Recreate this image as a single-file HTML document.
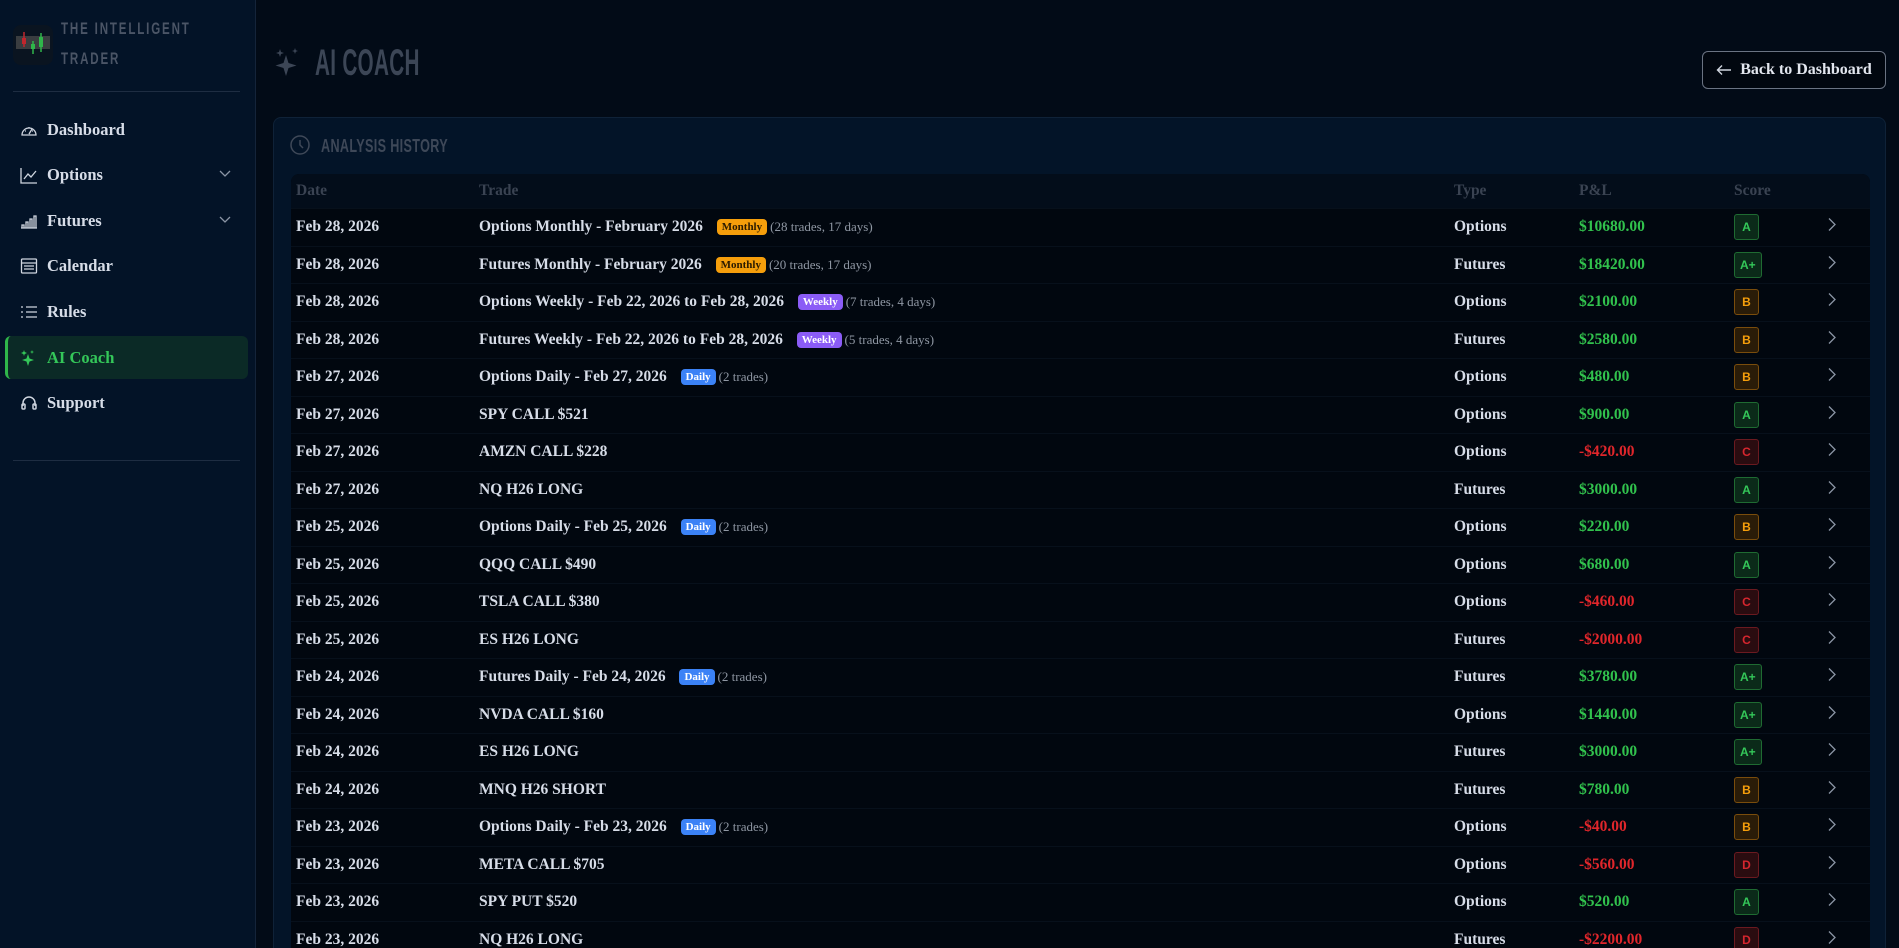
<!DOCTYPE html>
<html style="width:1899px;height:948px;overflow:hidden"><head><meta charset="utf-8"><style>
*{box-sizing:border-box;margin:0;padding:0}
body{width:1899px;height:948px;overflow:hidden;position:relative;background:#020b17;font-family:"Liberation Serif","DejaVu Serif",serif;color:#d7dde8}
.side{position:absolute;left:0;top:0;width:256px;height:948px;background:#031327;border-right:1px solid #14243a}
.logo{position:absolute;left:13px;top:25px;width:40px;height:40px;border-radius:8px;background:#0a1420}
.brand{position:absolute;left:61px;top:14px;font-family:"Liberation Sans",sans-serif;font-weight:bold;font-size:17px;letter-spacing:2.7px;line-height:30px;color:#4b5566;transform:scaleX(0.68);transform-origin:left top;white-space:nowrap}
.hr{position:absolute;left:13px;width:227px;height:1px;background:#1e2d42}
.nav{position:absolute;left:20px;font-weight:bold;font-size:16.5px;color:#d7dde8;display:flex;align-items:center;gap:9px}
.nav svg{width:18px;height:18px}
.chev{position:absolute;left:219px}
.active{position:absolute;left:5px;top:336px;width:243px;height:43px;background:#0b2a26;border-left:3px solid #2fb54a;border-radius:6px}
.title{position:absolute;left:315px;top:42px;font-family:"Liberation Sans",sans-serif;font-weight:bold;font-size:37px;letter-spacing:0.5px;color:#3c4656;transform:scaleX(0.56);transform-origin:left top;white-space:nowrap}
.back{position:absolute;left:1702px;top:51px;width:184px;height:38px;border:1px solid #6a7382;border-radius:6px;background:#01070f;font-weight:bold;font-size:16px;color:#e2e6ee;display:flex;align-items:center;justify-content:center;gap:8px}
.card{position:absolute;left:273px;top:117px;width:1613px;height:831px;overflow:hidden;background:#031428;border:1px solid #0f2238;border-bottom:none;border-radius:8px 8px 0 0}
.ch{position:absolute;left:47px;top:18px;font-family:"Liberation Sans",sans-serif;font-weight:bold;font-size:18px;letter-spacing:.5px;color:#3e4858;transform:scaleX(0.7);transform-origin:left top;white-space:nowrap}
.tbl{position:absolute;left:17px;top:56px;width:1579px;background:#01070f;border-radius:8px;overflow:hidden}
.row{position:relative;height:37.5px;border-top:1px solid #07101b;font-weight:bold;font-size:15.5px}
.hd{height:34px;background:#030d1a;color:#3a4352;border:none}
.row>div{position:absolute;top:50%;transform:translateY(-50%);white-space:nowrap}
.c1{left:5px}.c2{left:188px}.c3{left:1163px}.c4{left:1288px}.c5{left:1443px}.c6{left:1536px}
.g{color:#31c24d}.r{color:#e0262b}
.tag{display:inline-block;font-size:11px;padding:2px 5px;border-radius:4px;margin-left:10px;vertical-align:1px}
.m{background:#f59e0b;color:#2a1a00}.w{background:#8b5cf6;color:#fff}.d{background:#3b82f6;color:#fff}
.sub{font-weight:normal;font-size:13px;color:#8f97a3;margin-left:3px}
.sc{display:inline-block;min-width:25px;height:26px;line-height:24px;padding:0 5px;text-align:center;border-radius:3px;border:1px solid;font-family:"Liberation Sans",sans-serif;font-size:12px;font-weight:bold}
.A{background:#0b2a19;border-color:#1f6b32;color:#34c759}
.B{background:#2a1c08;border-color:#7a4d0c;color:#f59e0b}
.C{background:#2a0c10;border-color:#6b1a20;color:#d6262e}
</style></head><body>
<div class="side">
<div class="logo"><svg width="40" height="40"><rect x="3" y="11" width="34" height="13" fill="#3a3d40"/><line x1="11" y1="7" x2="11" y2="22" stroke="#c0262d" stroke-width="1.5"/><rect x="9" y="13" width="4" height="6" fill="#c0262d"/><line x1="20" y1="16" x2="20" y2="29" stroke="#2fb54a" stroke-width="1.5"/><rect x="18" y="19" width="4" height="5" fill="#2fb54a"/><line x1="28" y1="8" x2="28" y2="27" stroke="#2fb54a" stroke-width="1.5"/><rect x="26" y="12" width="4" height="10" fill="#2fb54a"/></svg></div>
<div class="brand">THE INTELLIGENT<br>TRADER</div>
<div class="hr" style="top:91px"></div>
<div class="nav" style="top:120px"><svg viewBox="0 0 18 18" fill="none" stroke="#cfd5df" stroke-width="1.3"><path d="M2 14a7 7 0 1 1 14 0zM9 13l3-5M5 10h1M12 10h1M9 6v1"/></svg>Dashboard</div>
<div class="nav" style="top:165px"><svg viewBox="0 0 18 18" fill="none" stroke="#cfd5df" stroke-width="1.3"><path d="M1 2v15h16M4 13l4-5 3 3 5-6"/></svg>Options</div>
<svg class="chev" style="top:170px" width="12" height="8" viewBox="0 0 12 8" fill="none" stroke="#8b95a5" stroke-width="1.3"><path d="M1 1l5 5 5-5"/></svg>
<div class="nav" style="top:211px"><svg viewBox="0 0 18 18" fill="none" stroke="#cfd5df" stroke-width="1.3"><path d="M1 16h16M2 16v-3h2v3M6 16v-6h2v6M10 16v-9h2v9M14 16v-12h2v12"/></svg>Futures</div>
<svg class="chev" style="top:216px" width="12" height="8" viewBox="0 0 12 8" fill="none" stroke="#8b95a5" stroke-width="1.3"><path d="M1 1l5 5 5-5"/></svg>
<div class="nav" style="top:256px"><svg viewBox="0 0 18 18" fill="none" stroke="#cfd5df" stroke-width="1.3"><rect x="1.5" y="2" width="15" height="14" rx="1"/><path d="M1.5 6h15M4 9h10M4 12h10"/></svg>Calendar</div>
<div class="nav" style="top:302px"><svg viewBox="0 0 18 18" fill="none" stroke="#cfd5df" stroke-width="1.3"><path d="M6 4h11M6 9h11M6 14h11M1 4h2M1 9h2M1 14h2"/></svg>Rules</div>
<div class="active"></div>
<div class="nav" style="top:348px;color:#34c759"><svg viewBox="0 0 18 18" fill="#34c759"><path d="M8 5l1.5 4.5L14 11l-4.5 1.5L8 17l-1.5-4.5L2 11l4.5-1.5zM4 1l.7 2L7 4l-2.3 1L4 7l-.7-2L1 4l2.3-1zM12 1l.5 1.5L14 3l-1.5.5L12 5l-.5-1.5L10 3l1.5-.5z"/></svg>AI Coach</div>
<div class="nav" style="top:393px"><svg viewBox="0 0 18 18" fill="none" stroke="#cfd5df" stroke-width="1.5"><path d="M3 12V9a6 6 0 0 1 12 0v3"/><rect x="2" y="10" width="3" height="5" rx="1"/><rect x="13" y="10" width="3" height="5" rx="1"/></svg>Support</div>
<div class="hr" style="top:460px"></div>
</div>
<svg style="position:absolute;left:274px;top:46px" width="28" height="34" viewBox="0 0 28 34" fill="#3c4656"><path d="M12 9l2.5 8 8 2.5-8 2.5-2.5 8-2.5-8-8-2.5 8-2.5zM6 3l1 3 3 1-3 1-1 3-1-3-3-1 3-1zM21 2l.8 2.2L24 5l-2.2.8L21 8l-.8-2.2L18 5l2.2-.8z"/></svg>
<div class="title">AI COACH</div>
<div class="back"><svg width="16" height="12" viewBox="0 0 16 12" fill="none" stroke="#cfd5df" stroke-width="1.4"><path d="M15 6H2M6 1.5L1.5 6 6 10.5"/></svg>Back to Dashboard</div>
<div class="card">
<svg style="position:absolute;left:15px;top:16px" width="22" height="22" viewBox="0 0 22 22" fill="none" stroke="#3e4858" stroke-width="1.5"><circle cx="11" cy="11" r="9"/><path d="M11 6v5l3 3"/></svg>
<div class="ch">ANALYSIS HISTORY</div>
<div class="tbl">
<div class="row hd"><div class="c1">Date</div><div class="c2">Trade</div><div class="c3">Type</div><div class="c4">P&amp;L</div><div class="c5">Score</div></div>
<div class="row"><div class="c1">Feb 28, 2026</div><div class="c2">Options Monthly - February 2026 <span class="tag m">Monthly</span><span class="sub">(28 trades, 17 days)</span></div><div class="c3">Options</div><div class="c4 g">$10680.00</div><div class="c5"><span class="sc A">A</span></div><div class="c6"><svg width="10" height="16" viewBox="0 0 10 16" fill="none" stroke="#8b95a5" stroke-width="1.3"><path d="M2 2l6 6-6 6"/></svg></div></div>
<div class="row"><div class="c1">Feb 28, 2026</div><div class="c2">Futures Monthly - February 2026 <span class="tag m">Monthly</span><span class="sub">(20 trades, 17 days)</span></div><div class="c3">Futures</div><div class="c4 g">$18420.00</div><div class="c5"><span class="sc A">A+</span></div><div class="c6"><svg width="10" height="16" viewBox="0 0 10 16" fill="none" stroke="#8b95a5" stroke-width="1.3"><path d="M2 2l6 6-6 6"/></svg></div></div>
<div class="row"><div class="c1">Feb 28, 2026</div><div class="c2">Options Weekly - Feb 22, 2026 to Feb 28, 2026 <span class="tag w">Weekly</span><span class="sub">(7 trades, 4 days)</span></div><div class="c3">Options</div><div class="c4 g">$2100.00</div><div class="c5"><span class="sc B">B</span></div><div class="c6"><svg width="10" height="16" viewBox="0 0 10 16" fill="none" stroke="#8b95a5" stroke-width="1.3"><path d="M2 2l6 6-6 6"/></svg></div></div>
<div class="row"><div class="c1">Feb 28, 2026</div><div class="c2">Futures Weekly - Feb 22, 2026 to Feb 28, 2026 <span class="tag w">Weekly</span><span class="sub">(5 trades, 4 days)</span></div><div class="c3">Futures</div><div class="c4 g">$2580.00</div><div class="c5"><span class="sc B">B</span></div><div class="c6"><svg width="10" height="16" viewBox="0 0 10 16" fill="none" stroke="#8b95a5" stroke-width="1.3"><path d="M2 2l6 6-6 6"/></svg></div></div>
<div class="row"><div class="c1">Feb 27, 2026</div><div class="c2">Options Daily - Feb 27, 2026 <span class="tag d">Daily</span><span class="sub">(2 trades)</span></div><div class="c3">Options</div><div class="c4 g">$480.00</div><div class="c5"><span class="sc B">B</span></div><div class="c6"><svg width="10" height="16" viewBox="0 0 10 16" fill="none" stroke="#8b95a5" stroke-width="1.3"><path d="M2 2l6 6-6 6"/></svg></div></div>
<div class="row"><div class="c1">Feb 27, 2026</div><div class="c2">SPY CALL $521</div><div class="c3">Options</div><div class="c4 g">$900.00</div><div class="c5"><span class="sc A">A</span></div><div class="c6"><svg width="10" height="16" viewBox="0 0 10 16" fill="none" stroke="#8b95a5" stroke-width="1.3"><path d="M2 2l6 6-6 6"/></svg></div></div>
<div class="row"><div class="c1">Feb 27, 2026</div><div class="c2">AMZN CALL $228</div><div class="c3">Options</div><div class="c4 r">-$420.00</div><div class="c5"><span class="sc C">C</span></div><div class="c6"><svg width="10" height="16" viewBox="0 0 10 16" fill="none" stroke="#8b95a5" stroke-width="1.3"><path d="M2 2l6 6-6 6"/></svg></div></div>
<div class="row"><div class="c1">Feb 27, 2026</div><div class="c2">NQ H26 LONG</div><div class="c3">Futures</div><div class="c4 g">$3000.00</div><div class="c5"><span class="sc A">A</span></div><div class="c6"><svg width="10" height="16" viewBox="0 0 10 16" fill="none" stroke="#8b95a5" stroke-width="1.3"><path d="M2 2l6 6-6 6"/></svg></div></div>
<div class="row"><div class="c1">Feb 25, 2026</div><div class="c2">Options Daily - Feb 25, 2026 <span class="tag d">Daily</span><span class="sub">(2 trades)</span></div><div class="c3">Options</div><div class="c4 g">$220.00</div><div class="c5"><span class="sc B">B</span></div><div class="c6"><svg width="10" height="16" viewBox="0 0 10 16" fill="none" stroke="#8b95a5" stroke-width="1.3"><path d="M2 2l6 6-6 6"/></svg></div></div>
<div class="row"><div class="c1">Feb 25, 2026</div><div class="c2">QQQ CALL $490</div><div class="c3">Options</div><div class="c4 g">$680.00</div><div class="c5"><span class="sc A">A</span></div><div class="c6"><svg width="10" height="16" viewBox="0 0 10 16" fill="none" stroke="#8b95a5" stroke-width="1.3"><path d="M2 2l6 6-6 6"/></svg></div></div>
<div class="row"><div class="c1">Feb 25, 2026</div><div class="c2">TSLA CALL $380</div><div class="c3">Options</div><div class="c4 r">-$460.00</div><div class="c5"><span class="sc C">C</span></div><div class="c6"><svg width="10" height="16" viewBox="0 0 10 16" fill="none" stroke="#8b95a5" stroke-width="1.3"><path d="M2 2l6 6-6 6"/></svg></div></div>
<div class="row"><div class="c1">Feb 25, 2026</div><div class="c2">ES H26 LONG</div><div class="c3">Futures</div><div class="c4 r">-$2000.00</div><div class="c5"><span class="sc C">C</span></div><div class="c6"><svg width="10" height="16" viewBox="0 0 10 16" fill="none" stroke="#8b95a5" stroke-width="1.3"><path d="M2 2l6 6-6 6"/></svg></div></div>
<div class="row"><div class="c1">Feb 24, 2026</div><div class="c2">Futures Daily - Feb 24, 2026 <span class="tag d">Daily</span><span class="sub">(2 trades)</span></div><div class="c3">Futures</div><div class="c4 g">$3780.00</div><div class="c5"><span class="sc A">A+</span></div><div class="c6"><svg width="10" height="16" viewBox="0 0 10 16" fill="none" stroke="#8b95a5" stroke-width="1.3"><path d="M2 2l6 6-6 6"/></svg></div></div>
<div class="row"><div class="c1">Feb 24, 2026</div><div class="c2">NVDA CALL $160</div><div class="c3">Options</div><div class="c4 g">$1440.00</div><div class="c5"><span class="sc A">A+</span></div><div class="c6"><svg width="10" height="16" viewBox="0 0 10 16" fill="none" stroke="#8b95a5" stroke-width="1.3"><path d="M2 2l6 6-6 6"/></svg></div></div>
<div class="row"><div class="c1">Feb 24, 2026</div><div class="c2">ES H26 LONG</div><div class="c3">Futures</div><div class="c4 g">$3000.00</div><div class="c5"><span class="sc A">A+</span></div><div class="c6"><svg width="10" height="16" viewBox="0 0 10 16" fill="none" stroke="#8b95a5" stroke-width="1.3"><path d="M2 2l6 6-6 6"/></svg></div></div>
<div class="row"><div class="c1">Feb 24, 2026</div><div class="c2">MNQ H26 SHORT</div><div class="c3">Futures</div><div class="c4 g">$780.00</div><div class="c5"><span class="sc B">B</span></div><div class="c6"><svg width="10" height="16" viewBox="0 0 10 16" fill="none" stroke="#8b95a5" stroke-width="1.3"><path d="M2 2l6 6-6 6"/></svg></div></div>
<div class="row"><div class="c1">Feb 23, 2026</div><div class="c2">Options Daily - Feb 23, 2026 <span class="tag d">Daily</span><span class="sub">(2 trades)</span></div><div class="c3">Options</div><div class="c4 r">-$40.00</div><div class="c5"><span class="sc B">B</span></div><div class="c6"><svg width="10" height="16" viewBox="0 0 10 16" fill="none" stroke="#8b95a5" stroke-width="1.3"><path d="M2 2l6 6-6 6"/></svg></div></div>
<div class="row"><div class="c1">Feb 23, 2026</div><div class="c2">META CALL $705</div><div class="c3">Options</div><div class="c4 r">-$560.00</div><div class="c5"><span class="sc C">D</span></div><div class="c6"><svg width="10" height="16" viewBox="0 0 10 16" fill="none" stroke="#8b95a5" stroke-width="1.3"><path d="M2 2l6 6-6 6"/></svg></div></div>
<div class="row"><div class="c1">Feb 23, 2026</div><div class="c2">SPY PUT $520</div><div class="c3">Options</div><div class="c4 g">$520.00</div><div class="c5"><span class="sc A">A</span></div><div class="c6"><svg width="10" height="16" viewBox="0 0 10 16" fill="none" stroke="#8b95a5" stroke-width="1.3"><path d="M2 2l6 6-6 6"/></svg></div></div>
<div class="row"><div class="c1">Feb 23, 2026</div><div class="c2">NQ H26 LONG</div><div class="c3">Futures</div><div class="c4 r">-$2200.00</div><div class="c5"><span class="sc C">D</span></div><div class="c6"><svg width="10" height="16" viewBox="0 0 10 16" fill="none" stroke="#8b95a5" stroke-width="1.3"><path d="M2 2l6 6-6 6"/></svg></div></div>
</div></div>
</body></html>
